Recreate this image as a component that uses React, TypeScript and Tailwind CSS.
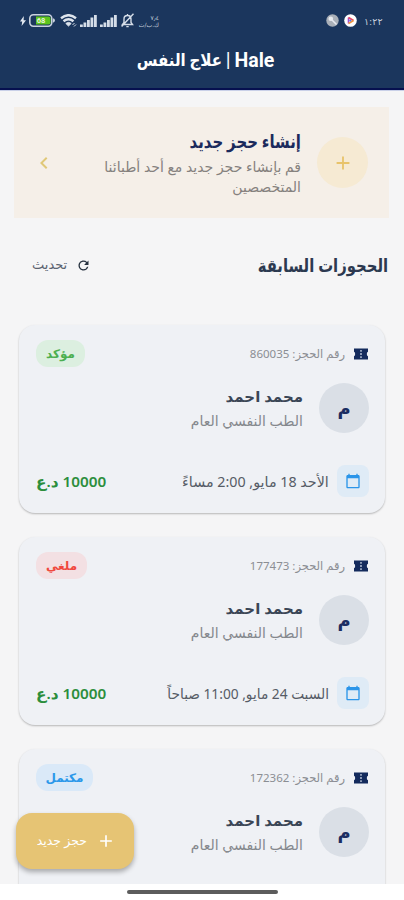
import { MdAdd, MdCalendarToday, MdChevronLeft, MdRefresh } from 'react-icons/md';

type Booking = {
  id: string;
  doctor: string;
  specialty: string;
  date?: string;
  price?: string;
  status: string;
  badge: string;
  dateScale?: string;
};

const bookings: Booking[] = [
  {
    id: "860035",
    doctor: "محمد احمد",
    specialty: "الطب النفسي العام",
    date: "الأحد 18 مايو, 2:00 مساءً",
    price: "10000 د.ع",
    status: "مؤكد",
    badge: "w-[49px] bg-[#dcefe0] text-[#4caf50]",
    dateScale: "scale-x-[1.02]"
  },
  {
    id: "177473",
    doctor: "محمد احمد",
    specialty: "الطب النفسي العام",
    date: "السبت 24 مايو, 11:00 صباحاً",
    price: "10000 د.ع",
    status: "ملغي",
    badge: "w-[51px] bg-[#f3e0e3] text-[#f0493e]",
    dateScale: "scale-x-[0.98]"
  },
  {
    id: "172362",
    doctor: "محمد احمد",
    specialty: "الطب النفسي العام",
    status: "مكتمل",
    badge: "w-[57px] bg-[#dae9f8] text-[#2b98ea]"
  }
];

function Signal({ className }: { className?: string }) {
  return (
    <svg viewBox="0 0 17 12" className={className} fill="#d5dde8">
      <rect x="0" y="9.5" width="2.8" height="2.5" />
      <rect x="3.5" y="7.5" width="2.8" height="4.5" />
      <rect x="7" y="5" width="2.8" height="7" />
      <rect x="10.5" y="2.5" width="2.8" height="9.5" />
      <rect x="14" y="0" width="2.8" height="12" />
    </svg>
  );
}

function StatusBar() {
  return (
    <div dir="ltr" className="flex h-[41px] items-center justify-between pl-5 pr-[21px]">
      <div className="flex items-center">
        <svg viewBox="0 0 6 10" className="h-[10px] w-[6px]" fill="#e3e9f1">
          <path d="M3.8 0 0 5.6h2.2L1.6 10 6 4.2H3.6z" />
        </svg>
        <svg viewBox="0 0 26 13" className="ml-[3px] h-[13px] w-[26px]">
          <rect x=".8" y=".8" width="22" height="11.4" rx="3.6" fill="#1b365d" stroke="#c9d2de" strokeWidth="1.6" />
          <path d="M7 2.6h12.5q2 0 2 2v4q0 2-2 2H7z" fill="#5cc41c" />
          <path d="M24 4.3q2 .6 2 2.2t-2 2.2z" fill="#c9d2de" />
          <text x="12" y="9.3" textAnchor="middle" fontSize="7.5" fontWeight="700" fontFamily="Roboto" fill="#e8f5d8">68</text>
        </svg>
        <svg viewBox="0 0 17 13" className="ml-[5px] h-[13px] w-[17px]" fill="none" stroke="#dde4ed" strokeWidth="2.4">
          <path d="M1 4.2Q8.5-1.8 16 4.2" />
          <path d="M3.5 7.2Q8.5 3.2 13.5 7.2" />
          <path d="M5.8 9.4 8.5 12l2.7-2.6q-2.7-2-5.4 0z" fill="#dde4ed" strokeWidth="1" />
          <path d="m12.5 11 2-2M14 12.5l2-2" strokeWidth="1" />
        </svg>
        <Signal className="ml-[3px] h-3 w-[17px]" />
        <Signal className="ml-[3px] h-3 w-[17px]" />
        <svg viewBox="0 0 13 15" className="ml-1 h-[15px] w-[13px]" fill="none" stroke="#d5dde8" strokeWidth="1.4">
          <path d="M1.5 11.5h10L10 9.5V6q0-3.5-3.5-3.5T3 6v3.5zM5.3 13.6h2.4M6.5 1v1.5M12.5.8.6 13.6" />
        </svg>
        <div className="ml-[5px] flex w-5 flex-col items-end font-['DejaVu_Sans'] text-[6px] leading-[7px] text-[#c8d2de]">
          <span>٧٫٤</span>
          <span className="whitespace-nowrap">ك.ب/ث</span>
        </div>
      </div>
      <div className="flex items-center">
        <svg viewBox="0 0 13 13" className="h-[13px] w-[13px]">
          <circle cx="6.5" cy="6.5" r="6.2" fill="#aab0b8" />
          <path d="m5.5 5.5 5 5" stroke="#e8ebef" strokeWidth="1.6" />
          <circle cx="4.8" cy="4.8" r="2.3" fill="#e8ebef" />
        </svg>
        <svg viewBox="0 0 13 13" className="ml-[5px] h-[13px] w-[13px]">
          <circle cx="6.5" cy="6.5" r="6.3" fill="#fff" />
          <path d="M4.5 3.5v6" stroke="#a04fd0" strokeWidth="1.6" />
          <path d="M4.5 3.5 9.5 6.5" stroke="#e8455c" strokeWidth="1.8" />
          <path d="M9.5 6.5 4.5 9.5" stroke="#f2953b" strokeWidth="1.6" />
          <circle cx="6.3" cy="6.6" r="1.1" fill="#557bea" />
        </svg>
        <span className="mt-[3px] ml-[7px] w-[19px] whitespace-nowrap font-['DejaVu_Sans'] text-[9.5px] text-[#c3cddb]">١:٢٢</span>
      </div>
    </div>
  );
}

function TicketIcon() {
  return (
    <svg viewBox="0 0 14 12" className="h-3 w-[14px]">
      <path d="M0 .5h14v3.2q-1.2.5-1.2 2.3T14 8.3v3.2H0V8.3q1.2-.5 1.2-2.3T0 3.7z" fill="#132a5c" />
      <path d="M7 2v1.8M7 5v2M7 8.2V10" stroke="#b4bfd2" strokeWidth="1.5" />
    </svg>
  );
}

function BookingCard({ booking }: { booking: Booking }) {
  return (
    <div className="h-[188px] shrink-0 rounded-[16px] bg-[#eff1f5] pt-[15px] pr-4 pl-[17px] shadow-[0_1px_2px_rgba(0,0,0,0.26)]">
      <div className="flex h-[27px] items-center justify-between">
        <div className="flex items-center gap-[9px] pr-px">
          <TicketIcon />
          <span className="whitespace-nowrap text-[11.5px] text-[#8b8e93]">رقم الحجز: {booking.id}</span>
        </div>
        <span className={`flex h-[27px] items-center justify-center rounded-[12px] text-[12px] font-bold ${booking.badge}`}>
          {booking.status}
        </span>
      </div>

      <div className="mt-4 flex h-[50px] items-center gap-4">
        <div className="flex h-[50px] w-[50px] items-center justify-center rounded-full bg-[#dadfe6] text-[18px] font-bold text-[#1b2d62]">م</div>
        <div className="flex flex-col">
          <span className="whitespace-nowrap text-[15px] leading-[26px] font-bold text-[#3b4656]">{booking.doctor}</span>
          <span className="whitespace-nowrap text-[14px] leading-6 text-[#85888d]">{booking.specialty}</span>
        </div>
      </div>

      {booking.date && (
        <div className="mt-8 flex h-8 items-center justify-between">
          <div className="flex items-center gap-2">
            <div className="flex h-8 w-8 items-center justify-center rounded-lg bg-[#dfebf6]">
              <MdCalendarToday className="h-4 w-4 text-[#2b95e9]" />
            </div>
            <span className={`origin-right whitespace-nowrap text-[14px] text-[#565c66] ${booking.dateScale}`}>{booking.date}</span>
          </div>
          <span className="origin-left scale-x-[1.02] whitespace-nowrap text-[15px] font-semibold text-[#2c8e3c]">{booking.price}</span>
        </div>
      )}
    </div>
  );
}

export default function App() {
  return (
    <div dir="rtl" className="relative flex h-[900px] w-[404px] flex-col overflow-hidden bg-[#f5f5f6] font-['Noto_Sans','DejaVu_Sans',sans-serif]">
      <header className="h-[91px] shrink-0 border-b border-[#c9d0e8] bg-[#1b365d] shadow-[inset_0_-2px_0_#06104f]">
        <StatusBar />
        <h1 className="flex h-10 items-center justify-center gap-1 pl-[7px] font-['Roboto','DejaVu_Sans',sans-serif] text-[19.5px] font-bold text-white">
          <span>Hale</span>
          <span className="font-normal">|</span>
          <span className="w-[85px] text-[17px]">
            <span className="block w-[96px] origin-right scale-x-[0.885] whitespace-nowrap">علاج النفس</span>
          </span>
        </h1>
      </header>

      <main className="flex h-[793px] shrink-0 flex-col overflow-hidden">
        <section className="mt-4 mr-[15px] ml-[14px] flex h-[111px] shrink-0 items-center bg-[#f5efe8] pr-[21px] pl-[18px]">
          <div className="flex h-[51px] w-[51px] shrink-0 items-center justify-center rounded-full bg-[#f6ead3]">
            <MdAdd className="h-[22px] w-[22px] text-[#e8c36b]" />
          </div>
          <div className="mr-4 min-w-0 flex-1">
            <h2 className="origin-right scale-x-[0.83] whitespace-nowrap text-[18px] leading-6 font-bold text-[#1b2a5c]">إنشاء حجز جديد</h2>
            <p className="mt-1 whitespace-nowrap text-[14px] leading-5 text-[#85817e]">
              قم بإنشاء حجز جديد مع أحد أطبائنا
              <br />
              المتخصصين
            </p>
          </div>
          <MdChevronLeft className="h-6 w-6 shrink-0 text-[#e0c878]" />
        </section>

        <div className="mt-7 mr-4 ml-8 flex h-[38px] shrink-0 items-center justify-between">
          <h2 className="origin-right scale-x-[0.825] whitespace-nowrap text-[18px] font-bold text-[#2c3950]">الحجوزات السابقة</h2>
          <button className="flex items-center gap-[9px] text-[13px] text-[#5a6270]">
            <MdRefresh className="h-[15px] w-[15px] text-[#26313f]" />
            <span>تحديث</span>
          </button>
        </div>

        <div className="mt-[41px] mr-[19px] ml-[19px] flex flex-col gap-6">
          {bookings.map((booking) => (
            <BookingCard key={booking.id} booking={booking} />
          ))}
        </div>
      </main>

      <nav className="flex h-4 shrink-0 items-center justify-center bg-white">
        <div className="h-1 w-[151px] rounded-full bg-[#5c5c5c]" />
      </nav>

      <button className="absolute top-[813px] left-4 flex h-14 w-[118px] items-center gap-[9px] rounded-2xl bg-[#e6c474] pr-[18px] text-[12.5px] text-white shadow-[0_3px_5px_rgba(0,0,0,0.3)]">
        <MdAdd className="h-5 w-5 shrink-0" />
        <span className="whitespace-nowrap">حجز جديد</span>
      </button>
    </div>
  );
}
